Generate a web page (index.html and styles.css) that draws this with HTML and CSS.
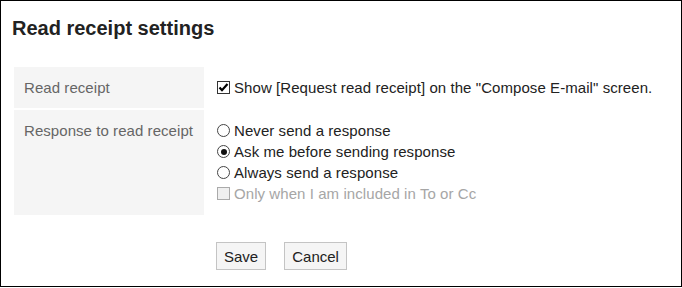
FILE: index.html
```html
<!DOCTYPE html>
<html>
<head>
<meta charset="utf-8">
<link rel="stylesheet" href="styles.css">
</head>
<body>
<div class="frame">
  <h1 class="title">Read receipt settings</h1>
  <div class="settings">
    <div class="label">Read receipt</div>
    <div class="value">
      <div class="opt"><span class="cb checked"><svg viewBox="0 0 13 13" width="13" height="13"><path d="M2.5 6.5 L5 9.2 L10.5 3" fill="none" stroke="#000" stroke-width="2.2"/></svg></span>Show [Request read receipt] on the "Compose E-mail" screen.</div>
    </div>
    <div class="label multi">Response to read receipt</div>
    <div class="value multi">
      <div class="opt"><span class="radio"></span>Never send a response</div>
      <div class="opt"><span class="radio on"></span>Ask me before sending response</div>
      <div class="opt"><span class="radio"></span>Always send a response</div>
      <div class="opt disabled"><span class="cb off"></span>Only when I am included in To or Cc</div>
    </div>
  </div>
  <div class="actions">
    <button class="btn">Save</button>
    <button class="btn">Cancel</button>
  </div>
</div>
</body>
</html>
```
FILE: styles.css
```css
html, body { margin: 0; padding: 0; background: #fff; }
body { font-family: Arial, "Liberation Sans", sans-serif; color: #333; }
.frame {
  box-sizing: border-box;
  width: 682px;
  height: 287px;
  border: 1px solid #000;
  padding: 16px 13px 0 13px;
}
.title {
  margin: 0 0 27px -2px;
  font-size: 20px;
  line-height: 23px;
  font-weight: bold;
  color: #222;
}
.settings {
  display: grid;
  grid-template-columns: 190px 1fr;
  row-gap: 2px;
}
.label {
  background: #f5f5f5;
  color: #666;
  font-size: 15px;
  line-height: 21px;
  padding: 10px 10px;
  letter-spacing: 0.06px;
}
.value {
  font-size: 15px;
  line-height: 21px;
  padding: 10px 0 10px 13px;
  color: #222;
  letter-spacing: 0.07px;
}
.label.multi, .value.multi { padding-bottom: 11px; }
.opt { display: flex; align-items: center; height: 21px; white-space: nowrap; }
.cb {
  box-sizing: border-box;
  width: 13px; height: 13px;
  margin-right: 4px;
  flex: none;
  display: inline-block;
}
.cb svg { display: block; }
.cb.checked { border: 1px solid #333; background: #fff; }
.cb.checked svg { margin: -1px; }
.cb.off { border: 1px solid #aaa; background: #efefef; }
.radio {
  box-sizing: border-box;
  width: 13px; height: 13px;
  border: 1px solid #444;
  border-radius: 50%;
  margin-right: 4px;
  flex: none;
  position: relative;
  background: #fff;
}
.radio.on::after {
  content: "";
  position: absolute;
  left: 2.5px; top: 2.5px;
  width: 6px; height: 6px;
  border-radius: 50%;
  background: #111;
}
.disabled { color: #a6a6a6; }
.actions {
  display: flex;
  gap: 18px;
  padding-left: 202px;
  margin-top: 27px;
}
.btn {
  box-sizing: border-box;
  height: 28px;
  padding: 0 7px;
  background: #f5f5f5;
  border: 1px solid #c4c4c4;
  border-radius: 0;
  font-family: Arial, "Liberation Sans", sans-serif;
  font-size: 15px;
  color: #222;
  min-width: 50px;
}
```
